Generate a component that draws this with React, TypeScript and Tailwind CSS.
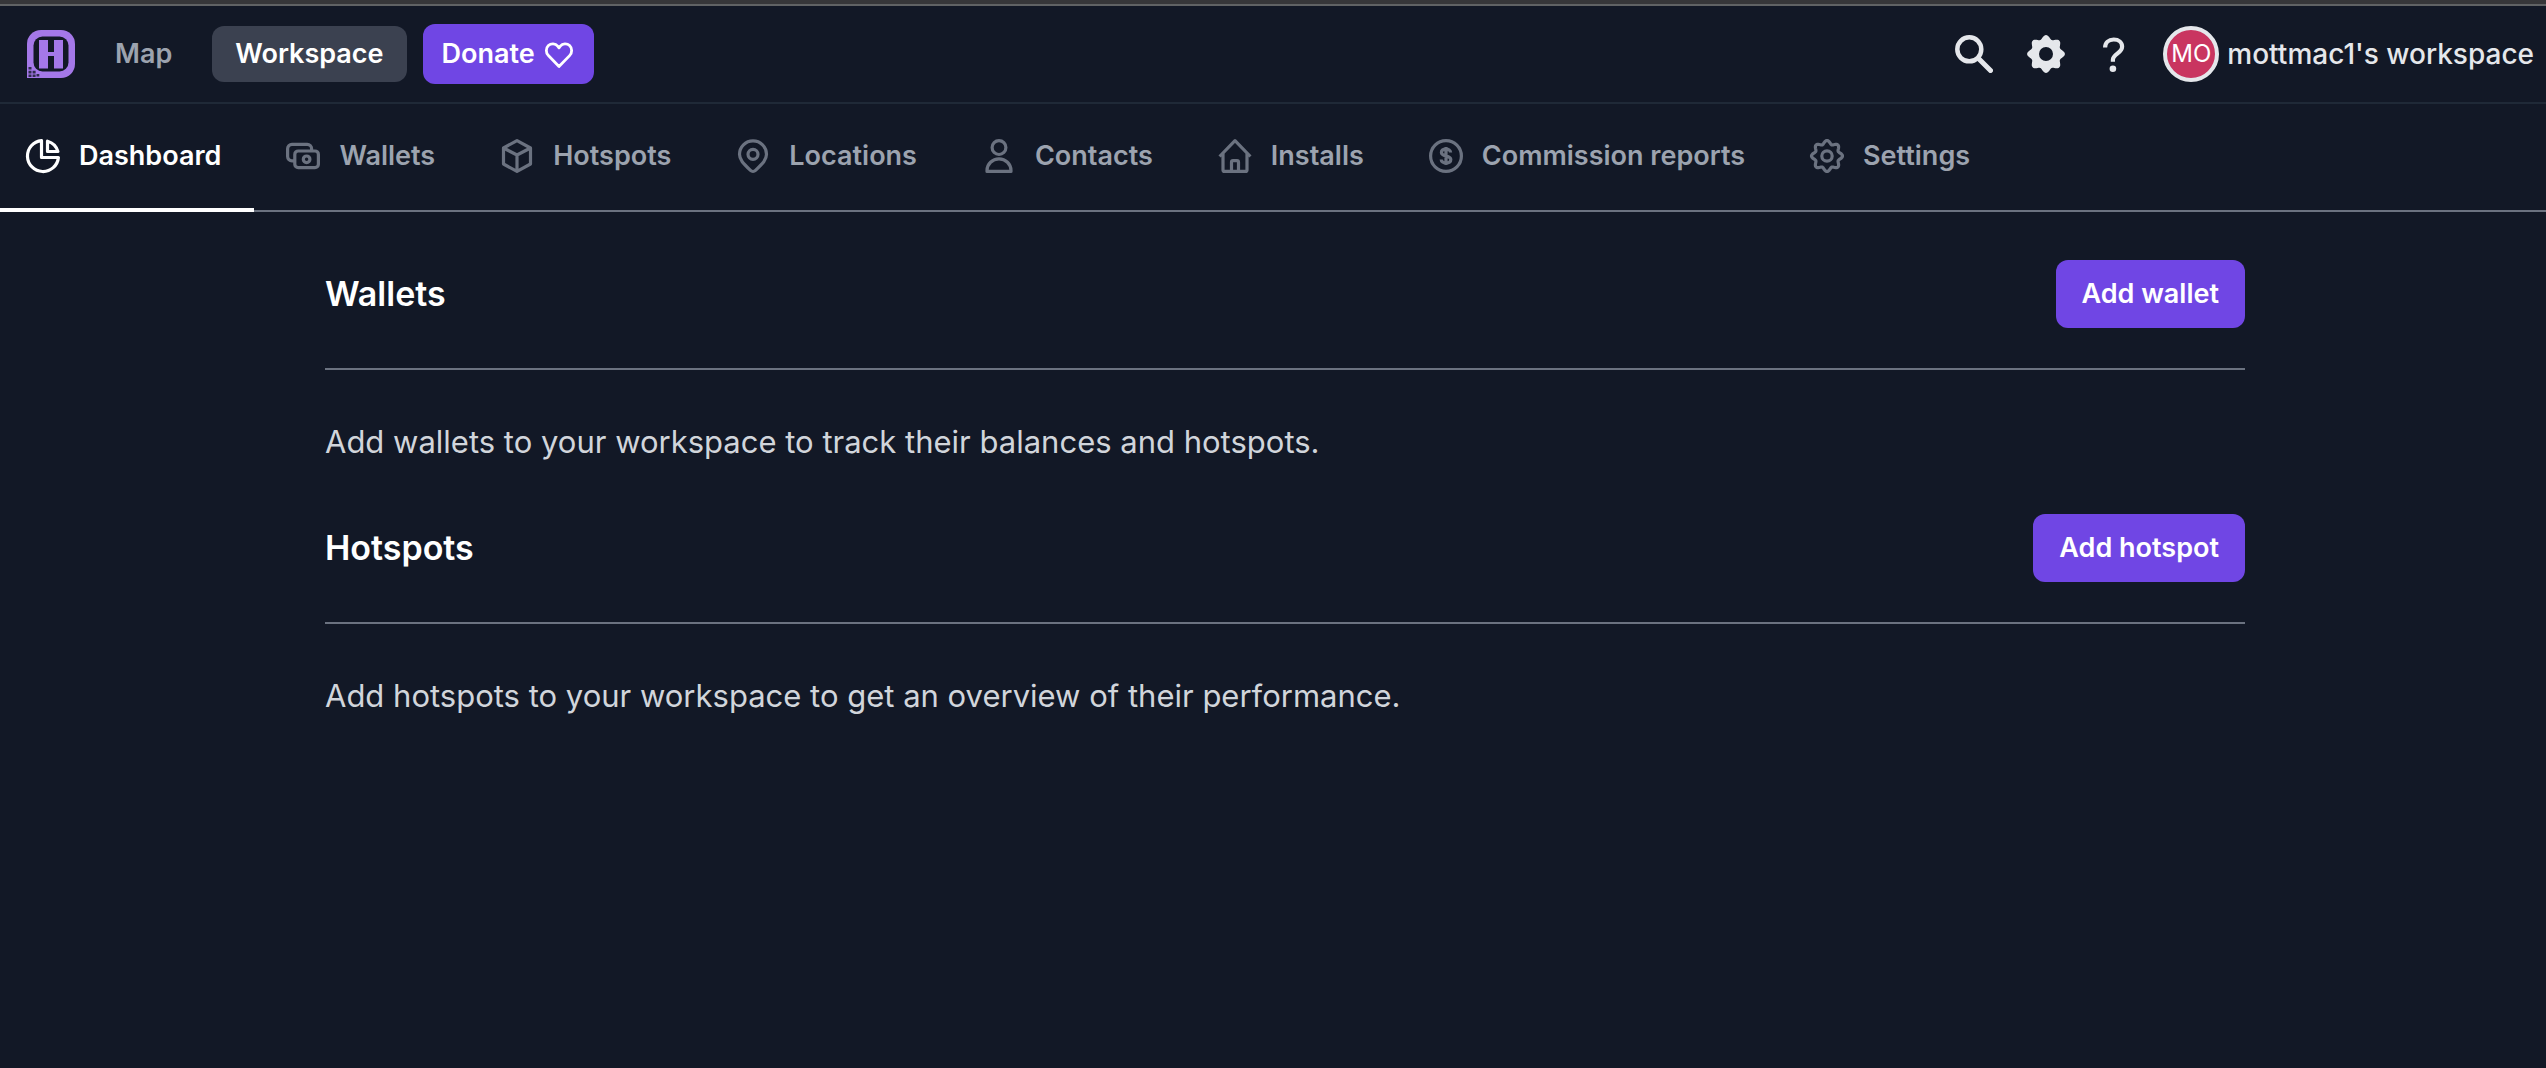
import React from "react";

/* Closed outline of an eight-toothed wheel with soft teeth. */
function wheel(center: number, radius: number, tooth: number) {
  const steps = 128;
  const points: string[] = [];
  for (let i = 0; i < steps; i++) {
    const a = (i / steps) * Math.PI * 2;
    const r = radius + tooth * Math.cos(8 * a);
    points.push(`${(center + r * Math.sin(a)).toFixed(2)} ${(center - r * Math.cos(a)).toFixed(2)}`);
  }
  return `M${points.join("L")}Z`;
}

const tabs: { label: string; active?: boolean; icon: React.ReactNode }[] = [
  {
    label: "Dashboard",
    active: true,
    icon: (
      <>
        <path d="M16.500 2.600v16.900h16.900A15.500 15.500 0 1 1 16.500 2.600z" />
        <path d="M22.500 3.200v10.300h10.400A15 15 0 0 0 22.500 3.200z" />
      </>
    ),
  },
  {
    label: "Wallets",
    icon: (
      <>
        <path d="M9.800 22.800H7a4.400 4.400 0 0 1-4.400-4.400v-7.700A4.400 4.400 0 0 1 7 6.300h15.200a4.400 4.400 0 0 1 4.400 4.400v2" />
        <rect x="9.800" y="13" width="23.600" height="16.700" rx="3.400" />
        <circle cx="21.600" cy="21.300" r="3.300" />
      </>
    ),
  },
  {
    label: "Hotspots",
    icon: <path d="M18 2.600l13.500 7.400v16L18 33.400 4.500 26V10zM4.500 10L18 17l13.500-7M18 17v16.400" />,
  },
  {
    label: "Locations",
    icon: (
      <>
        <path d="M4.500 16.300a13.500 13.500 0 0 1 27 0c0 5.400-3.600 9-11 16.100a3.600 3.600 0 0 1-5 0C8.100 25.300 4.500 21.700 4.500 16.300z" />
        <circle cx="18" cy="16.300" r="5" />
      </>
    ),
  },
  {
    label: "Contacts",
    icon: (
      <>
        <circle cx="18" cy="9.600" r="6.900" />
        <path d="M6 33.400v-.8c0-6.600 5.400-11.700 12-11.700s12 5.100 12 11.700v.8z" />
      </>
    ),
  },
  {
    label: "Installs",
    icon: (
      <>
        <path d="M2.600 18.500L18 2.600l15.400 15.900" />
        <path d="M6 15.500v16.400a1.500 1.500 0 0 0 1.500 1.500h21a1.500 1.500 0 0 0 1.500-1.500V15.500" />
        <path d="M14.500 33v-8.900a1.500 1.500 0 0 1 1.500-1.500h4a1.500 1.500 0 0 1 1.500 1.500V33" />
      </>
    ),
  },
  {
    label: "Commission reports",
    icon: (
      <>
        <circle cx="18" cy="18" r="15.400" />
        <path d="M22.600 14.400c0-2-2-3.300-4.600-3.300s-4.600 1.200-4.600 3.400c0 4.800 9.400 2.200 9.400 7 0 2.200-2 3.500-4.800 3.500s-4.800-1.400-4.800-3.400M18 9v18" />
      </>
    ),
  },
  {
    label: "Settings",
    icon: (
      <>
        <path d={wheel(18, 13.8, 1.7)} />
        <circle cx="18" cy="18" r="5.200" />
      </>
    ),
  },
];

function Logo() {
  return (
    <svg viewBox="0 0 48 48" className="size-12" role="img" aria-label="Home">
      <path d="M14 0h20a14 14 0 0 1 14 14v20a14 14 0 0 1-14 14H0V14A14 14 0 0 1 14 0z" fill="#a478e8" />
      <rect x="6.500" y="6.500" width="35" height="35" rx="9" fill="#121826" />
      <path d="M12 10h9v12h6V10h9v28.500h-9V26h-6v12.500h-9z" fill="#a478e8" />
      <path d="M1.500 37h3v2.600h-3zM1.500 40.800h3v2.600h-3zM5.600 40.800h3v2.600h-3zM1.500 44.500h3v2.600h-3zM5.600 44.500h3v2.600h-3zM9.500 44h2.800v2.600H9.500z" fill="#121826" fillOpacity=".8" />
    </svg>
  );
}

function Section({ title, action, text }: { title: string; action: string; text: string }) {
  return (
    <section>
      <div className="flex items-center justify-between border-b-2 border-[#6b7280] pb-10">
        <h2 className="text-[34px] leading-[48px] font-semibold text-white">{title}</h2>
        <button type="button" className="h-[68px] rounded-xl bg-[#7046e4] px-[26px] text-white">
          {action}
        </button>
      </div>
      <p className="py-12 text-[31px] leading-[48px] font-normal text-[#d1d5db]">{text}</p>
    </section>
  );
}

export default function App() {
  return (
    <div className="min-h-screen bg-[#121826] font-['Inter',sans-serif] text-[27px] leading-10 font-semibold text-[#e5e7eb]">
      <div className="h-1.5 border-b-2 border-[#606264] bg-[#363639]" />
      <header className="flex h-[98px] items-center justify-between border-b-2 border-[#1f2937] pr-3 pl-[27px]">
        <div className="flex items-center">
          <a href="#home">
            <Logo />
          </a>
          <a href="#map" className="ml-10 text-[#9ca3af]">
            Map
          </a>
          <a href="#workspace" className="ml-10 rounded-xl bg-[#3b4150] px-[23px] py-2 text-white">
            Workspace
          </a>
          <a href="#donate" className="ml-4 flex h-[60px] items-center gap-2 rounded-xl bg-[#7046e4] px-[19px] text-white">
            Donate
            <svg viewBox="0 0 32 32" className="size-8" fill="none" stroke="currentColor" strokeWidth="2.800" strokeLinejoin="round" aria-hidden="true">
              <path d="M16 28.500L5.400 17.600C2.600 14.700 2.700 10.200 5.400 7.600c2.700-2.600 7-2.300 9.300.5L16 9.800l1.300-1.700c2.300-2.800 6.600-3.100 9.300-.5 2.700 2.600 2.800 7.100 0 10z" />
            </svg>
          </a>
        </div>
        <div className="flex items-center gap-[34px]">
          <button type="button" aria-label="Search">
            <svg viewBox="0 0 38 38" className="size-[38px]" fill="none" stroke="currentColor" aria-hidden="true">
              <circle cx="14.300" cy="14.300" r="12" strokeWidth="4.500" />
              <path d="M23.500 23.500L35.500 35.500" strokeWidth="5" strokeLinecap="round" />
            </svg>
          </button>
          <button type="button" aria-label="Settings">
            <svg viewBox="0 0 38 38" className="size-[38px]" fill="currentColor" fillRule="evenodd" aria-hidden="true">
              <path d={`${wheel(19, 17, 1.9)}M19 12a7 7 0 1 0 0 14a7 7 0 1 0 0-14z`} />
            </svg>
          </button>
          <button type="button" aria-label="Help">
            <svg viewBox="0 0 30 38" className="h-[38px] w-[30px]" fill="none" stroke="currentColor" strokeWidth="4.200" aria-hidden="true">
              <path d="M6.100 12.600C6.100 7.600 9.600 4.500 14.700 4.500c5 0 8.400 2.900 8.400 7.200 0 6.300-9.200 7.400-9.200 13v2" />
              <circle cx="13.900" cy="33.800" r="3.300" fill="currentColor" stroke="none" />
            </svg>
          </button>
          <button type="button" className="flex items-center gap-2 text-[28px] font-medium">
            <span className="flex size-14 items-center justify-center rounded-full border-4 border-[#e5e7eb] bg-[#c93560] text-[24px] font-normal text-white">
              MO
            </span>
            mottmac1's workspace
          </button>
        </div>
      </header>
      <nav className="flex gap-[6px] border-b-2 border-[#6b7280]">
        {tabs.map((t) => (
          <a
            key={t.label}
            href={`#${t.label}`}
            aria-current={t.active ? "page" : undefined}
            className={`-mb-0.5 flex h-[108px] items-center gap-[18px] border-b-4 pr-[33px] pl-[25px] ${
              t.active ? "border-white text-white" : "border-transparent text-[#9ca3af]"
            }`}
          >
            <svg
              viewBox="0 0 36 36"
              fill="none"
              stroke="currentColor"
              strokeWidth="3.200"
              strokeLinejoin="round"
              className={`size-9 shrink-0 ${t.active ? "text-white" : "text-[#6b7280]"}`}
              aria-hidden="true"
            >
              {t.icon}
            </svg>
            {t.label}
          </a>
        ))}
      </nav>
      <div className="pl-6">
        <main className="mx-auto max-w-[1920px] pt-12">
          <Section title="Wallets" action="Add wallet" text="Add wallets to your workspace to track their balances and hotspots." />
          <Section title="Hotspots" action="Add hotspot" text="Add hotspots to your workspace to get an overview of their performance." />
        </main>
      </div>
    </div>
  );
}
